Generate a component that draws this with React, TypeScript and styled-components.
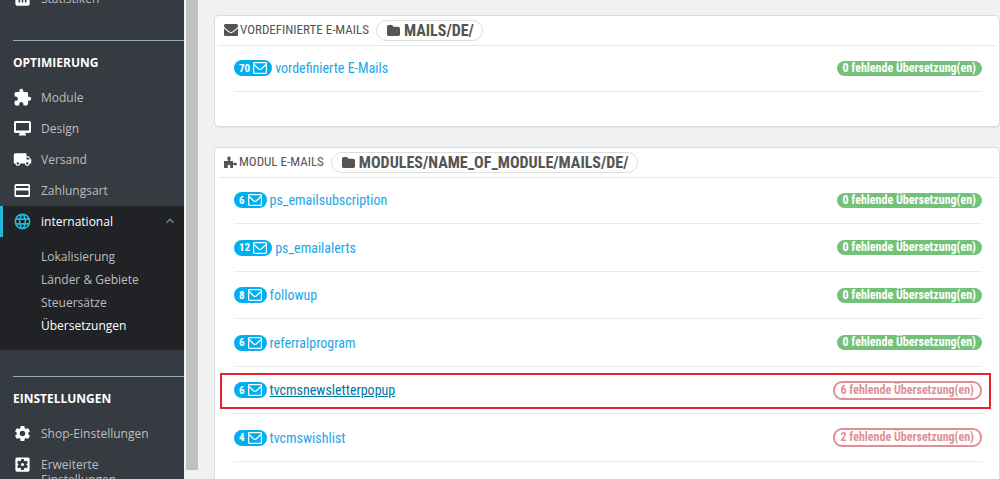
import React from "react";
import styled, { createGlobalStyle } from "styled-components";
import {
  MdAssessment,
  MdExtension,
  MdLocalShipping,
  MdLanguage,
  MdSettings,
  MdSettingsApplications,
  MdKeyboardArrowUp,
} from "react-icons/md";

const condensed = `"Ubuntu Condensed", "Roboto Condensed", "Open Sans Condensed", "Liberation Sans Narrow", "Liberation Sans", sans-serif`;

const GlobalStyle = createGlobalStyle`
  * { box-sizing: border-box; }
  body {
    margin: 0;
    background: #eff1f2;
    font-family: "Open Sans", "Noto Sans", sans-serif;
    font-size: 12px;
  }
  ul { list-style: none; margin: 0; padding: 0; }
  a { text-decoration: none; color: inherit; }
`;

const Page = styled.div`
  display: flex;
  height: 100vh;
  overflow: hidden;
`;

const Sidebar = styled.nav`
  flex: none;
  width: 184px;
  overflow: hidden;
  background: #363a41;
  color: #bebebe;
`;

const Track = styled.div`
  flex: none;
  width: 14px;
  padding: 0 0 9px 2px;
  background: #f1f1f1;
`;

const Thumb = styled.div`
  height: 100%;
  background: #c1c1c1;
`;

const Section = styled.section<{ $first?: boolean }>`
  margin-top: ${(p) => (p.$first ? "-17px" : "26px")};
`;

const SectionTitle = styled.h2`
  margin: 0 0 9px 13px;
  padding-top: 12px;
  border-top: 1px solid #93a8ac;
  color: #fff;
  font-size: 12px;
  line-height: 20px;
  font-weight: 700;
  text-transform: uppercase;
`;

const NavLink = styled.a<{ $active?: boolean }>`
  display: flex;
  align-items: flex-start;
  gap: 9px;
  min-height: 31px;
  padding: 6px 0 0 ${(p) => (p.$active ? "10px" : "13px")};
  border-left: ${(p) => (p.$active ? "3px solid #25b9d7" : "0")};
  color: ${(p) => (p.$active ? "#fff" : "inherit")};
  line-height: 20px;

  svg {
    flex: none;
    width: 19px;
    height: 19px;
    color: ${(p) => (p.$active ? "#25b9d7" : "#fff")};
  }
  span { flex: 1; }
  span + svg {
    width: 16px;
    height: 16px;
    margin: 1px 6px 0 0;
    color: #6c868e;
  }
`;

const MultiLine = styled.span`
  padding-right: 60px;
  && { line-height: 15px; padding-top: 2px; }
`;

const OpenGroup = styled.li`
  background: #202226;
  padding-bottom: 13px;
`;

const SubMenu = styled.ul`
  padding: 8px 0 0 41px;
`;

const SubLink = styled.a<{ $current?: boolean }>`
  display: block;
  line-height: 23px;
  color: ${(p) => (p.$current ? "#fff" : "#bebebe")};
`;

const Main = styled.main`
  flex: 1;
  min-width: 0;
  display: flex;
  flex-direction: column;
  gap: 20px;
  padding: 15px 0 0 16px;
  font-family: ${condensed};
`;

const Panel = styled.section`
  flex: none;
  padding-bottom: 34px;
  border: 1px solid #d9dddf;
  border-radius: 5px;
  background: #fff;
  box-shadow: 0 1px 1px #dfe3e6;
`;

const PanelHeader = styled.header`
  display: flex;
  align-items: center;
  gap: 7px;
  height: 30px;
  margin: 0 3px -1px;
  padding: 0 0 1px 6px;
  border-bottom: 1px solid #e8e8e8;
`;

const PanelTitle = styled.h1`
  display: flex;
  align-items: center;
  gap: 2px;
  margin: 0;
  color: #555;
  font-size: 13px;
  line-height: 20px;
  font-weight: 400;
  text-transform: uppercase;
`;

const PathPill = styled.span`
  display: flex;
  align-items: center;
  gap: 4px;
  height: 21px;
  padding: 0 8px 0 10px;
  border: 1px solid #ddd;
  border-radius: 11px;
  color: #555;
  font-size: 16px;
  line-height: 19px;
  font-weight: 700;
`;

const MailList = styled.ul`
  display: grid;
  grid-auto-rows: 47px 48px;
  padding: 0 17px 0 19px;
`;

const MailRow = styled.li<{ $marked?: boolean }>`
  position: relative;
  display: flex;
  align-items: center;
  gap: 3px;
  border-bottom: 1px solid #eaeaea;

  ${(p) =>
    p.$marked &&
    `&::after {
      content: "";
      position: absolute;
      inset: 6px -9px 4px -14px;
      border: 2px solid #e8202a;
      pointer-events: none;
    }`}
`;

const CountBadge = styled.span`
  display: flex;
  align-items: center;
  gap: 3px;
  height: 16px;
  padding: 0 5px;
  border-radius: 8px;
  background: #00aff0;
  color: #fff;
  font-size: 11px;
  font-weight: 700;
`;

const MailLink = styled.a<{ $hover?: boolean }>`
  color: ${(p) => (p.$hover ? "#00769f" : "#1ea5e8")};
  font-size: 14px;
  line-height: 20px;
  text-decoration: ${(p) => (p.$hover ? "underline" : "none")};
`;

const Status = styled.span<{ $missing: boolean }>`
  margin-left: auto;
  padding: 0 6px;
  border: ${(p) => (p.$missing ? "2px solid #e08f95" : "0")};
  border-radius: 9px;
  background: ${(p) => (p.$missing ? "#fff" : "#72c279")};
  color: ${(p) => (p.$missing ? "#e08f95" : "#fff")};
  font-size: 12px;
  line-height: 15px;
  font-weight: 700;
`;

const Monitor = () => (
  <svg viewBox="0 0 19 19" fill="currentColor" aria-hidden="true">
    <path
      fillRule="evenodd"
      d="M2.500 2h14A1.500 1.500 0 0 1 18 3.500v9a1.500 1.500 0 0 1-1.500 1.500h-4.500l1 1.500v1H6v-1L7 14H2.500A1.500 1.500 0 0 1 1 12.500v-9A1.500 1.500 0 0 1 2.500 2zM3 4v7.500h13V4z"
    />
  </svg>
);

const Card = () => (
  <svg viewBox="0 0 19 19" fill="currentColor" aria-hidden="true">
    <path
      fillRule="evenodd"
      d="M3 3h12.500A1.500 1.500 0 0 1 17 4.500v10a1.500 1.500 0 0 1-1.500 1.500H3a1.500 1.500 0 0 1-1.500-1.500v-10A1.500 1.500 0 0 1 3 3zM3 5v2h12.500V5zM3 9.500V14h12.500V9.500z"
    />
  </svg>
);

const EnvelopeSolid = () => (
  <svg width="14" height="12" viewBox="0 0 28 22" preserveAspectRatio="none" fill="currentColor" aria-hidden="true">
    <path d="M28 8v11.500c0 1.400-1.100 2.500-2.500 2.500h-23c-1.400 0-2.500-1.100-2.500-2.500V8c.5.500 1 1 1.600 1.400 2.600 1.800 5.200 3.600 7.800 5.400 1.300 1 2.900 2.200 4.600 2.200s3.300-1.200 4.600-2.200c2.600-1.900 5.200-3.600 7.800-5.400.6-.4 1.100-.9 1.600-1.400zM28 2.900c0 2.300-1.500 4-3.200 5.200-2.600 1.900-5.300 3.600-7.900 5.500-.8.600-2 1.400-2.900 1.400s-2.100-.8-2.900-1.400C8.500 11.700 5.800 10 3.200 8.100 1.700 7.200 0 5.300 0 3.400 0 1.400 1 0 2.500 0h23C26.900 0 28 1.500 28 2.900z" />
  </svg>
);

const EnvelopeOutline = () => (
  <svg width="14" height="12" viewBox="0 0 14 12" fill="none" stroke="currentColor" aria-hidden="true">
    <rect x=".6" y=".6" width="12.800" height="10.800" rx=".8" strokeWidth="1.200" />
    <path d="M1 2.500 5.800 6.900Q7 7.900 8.200 6.900L13 2.500" strokeWidth="1.300" />
  </svg>
);

const Folder = () => (
  <svg width="13" height="11" viewBox="0 0 13 11" fill="currentColor" aria-hidden="true">
    <path d="M0 1.800C0 .8.800 0 1.800 0h2.600c1 0 1.800.8 1.800 1.800h5c1 0 1.800.7 1.800 1.700v5.700c0 1-.8 1.800-1.800 1.800H1.800C.8 11 0 10.200 0 9.200z" />
  </svg>
);

const Puzzle = () => (
  <svg width="13" height="12" viewBox="0 0 13 12" fill="currentColor" aria-hidden="true">
    <path d="M0 5h3.500c.6 0 .7-.5.300-1C3 3 3 .4 5 .4S7 3 6.200 4c-.4.500-.3 1 .3 1H9v1.700c0 .5.400.7.900.4 1.200-.8 3.100-.5 3.100.9s-1.900 1.700-3.100.9c-.5-.3-.9-.1-.9.400V12H6.300V9.800C6.300 8.300 3.700 8.300 3.700 9.800V12H0z" />
  </svg>
);

type Mail = { count: number; name: string; missing: number; marked?: boolean };

const moduleMails: Mail[] = [
  { count: 6, name: "ps_emailsubscription", missing: 0 },
  { count: 12, name: "ps_emailalerts", missing: 0 },
  { count: 8, name: "followup", missing: 0 },
  { count: 6, name: "referralprogram", missing: 0 },
  { count: 6, name: "tvcmsnewsletterpopup", missing: 6, marked: true },
  { count: 4, name: "tvcmswishlist", missing: 2 },
];

const Mails = ({ mails }: { mails: Mail[] }) => (
  <MailList>
    {mails.map((m) => (
      <MailRow key={m.name} $marked={m.marked}>
        <CountBadge>
          {m.count}
          <EnvelopeOutline />
        </CountBadge>
        <MailLink href="#" $hover={m.marked}>{m.name}</MailLink>
        <Status $missing={m.missing > 0}>{m.missing} fehlende Übersetzung(en)</Status>
      </MailRow>
    ))}
  </MailList>
);

export default function App() {
  return (
    <Page>
      <GlobalStyle />
      <Sidebar>
        <Section $first>
          <ul>
            <li><NavLink href="#"><MdAssessment /><span>Statistiken</span></NavLink></li>
          </ul>
        </Section>
        <Section>
          <SectionTitle>Optimierung</SectionTitle>
          <ul>
            <li><NavLink href="#"><MdExtension /><span>Module</span></NavLink></li>
            <li><NavLink href="#"><Monitor /><span>Design</span></NavLink></li>
            <li><NavLink href="#"><MdLocalShipping /><span>Versand</span></NavLink></li>
            <li><NavLink href="#"><Card /><span>Zahlungsart</span></NavLink></li>
            <OpenGroup>
              <NavLink href="#" $active>
                <MdLanguage /><span>international</span><MdKeyboardArrowUp />
              </NavLink>
              <SubMenu>
                <li><SubLink href="#">Lokalisierung</SubLink></li>
                <li><SubLink href="#">Länder &amp; Gebiete</SubLink></li>
                <li><SubLink href="#">Steuersätze</SubLink></li>
                <li><SubLink href="#" $current>Übersetzungen</SubLink></li>
              </SubMenu>
            </OpenGroup>
          </ul>
        </Section>
        <Section>
          <SectionTitle>Einstellungen</SectionTitle>
          <ul>
            <li><NavLink href="#"><MdSettings /><span>Shop-Einstellungen</span></NavLink></li>
            <li><NavLink href="#"><MdSettingsApplications /><MultiLine>Erweiterte Einstellungen</MultiLine></NavLink></li>
          </ul>
        </Section>
      </Sidebar>
      <Track><Thumb /></Track>
      <Main>
        <Panel>
          <PanelHeader>
            <PanelTitle><EnvelopeSolid />Vordefinierte E-Mails</PanelTitle>
            <PathPill><Folder />MAILS/DE/</PathPill>
          </PanelHeader>
          <Mails mails={[{ count: 70, name: "vordefinierte E-Mails", missing: 0 }]} />
        </Panel>
        <Panel>
          <PanelHeader>
            <PanelTitle><Puzzle />Modul E-Mails</PanelTitle>
            <PathPill><Folder />MODULES/NAME_OF_MODULE/MAILS/DE/</PathPill>
          </PanelHeader>
          <Mails mails={moduleMails} />
        </Panel>
      </Main>
    </Page>
  );
}
